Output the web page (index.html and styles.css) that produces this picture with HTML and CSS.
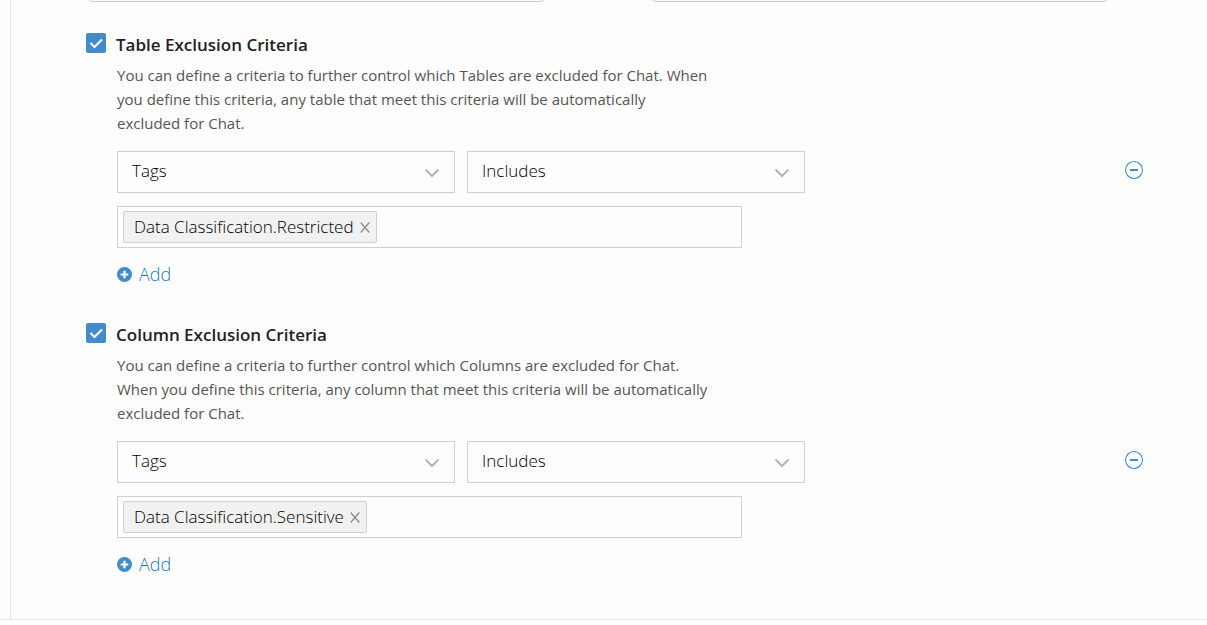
FILE: index.html
```html
<!DOCTYPE html>
<html lang="en">
<head>
  <meta charset="UTF-8">
  <meta name="viewport" content="width=device-width, initial-scale=1">
  <title>Chat Settings</title>
  <link rel="stylesheet" href="styles.css">
</head>
<body>
  <main class="panel">
    <!-- Fields scrolled under the top edge -->
    <div class="field-row">
      <input type="text" class="field" aria-label="Included">
      <input type="text" class="field" aria-label="Excluded">
    </div>

    <!-- Table criteria -->
    <section class="criteria">
      <input type="checkbox" id="tableCriteria" class="check" checked>
      <label for="tableCriteria" class="title">Table Exclusion Criteria</label>
      <div class="content">
        <p class="description">You can define a criteria to further control which Tables are excluded for Chat. When you define this criteria, any table that meet this criteria will be automatically excluded for Chat.</p>
        <div class="rule">
          <div class="rule-fields">
            <select class="select" aria-label="Table attribute">
              <option>Tags</option>
            </select>
            <select class="select" aria-label="Table condition">
              <option>Includes</option>
            </select>
          </div>
          <button type="button" class="remove" aria-label="Remove table rule">
            <svg width="20" height="20" viewBox="0 0 20 20" fill="none" stroke="currentColor">
              <circle cx="10" cy="10" r="8.5" stroke-width="1.1" />
              <path d="M6 10h8" stroke-width="2" />
            </svg>
          </button>
        </div>
        <div class="tag-box">
          <span class="tag">Data Classification.Restricted
            <button type="button" class="tag-close" aria-label="Remove tag">
              <svg width="10" height="12" viewBox="0 0 10 12" fill="none" stroke="currentColor" stroke-width="1.2">
                <path d="M.7 1.5l8.6 10M9.3 1.5l-8.6 10" />
              </svg>
            </button>
          </span>
          <input type="text" class="tag-input" aria-label="Table tags">
        </div>
        <button type="button" class="add">
          <svg width="15" height="15" viewBox="0 0 15 15">
            <circle cx="7.5" cy="7.5" r="7.5" fill="#428bca" />
            <path d="M7.5 3.7v7.6M3.7 7.5h7.6" stroke="#fff" stroke-width="2.2" />
          </svg>
          Add
        </button>
      </div>
    </section>

    <!-- Column criteria -->
    <section class="criteria">
      <input type="checkbox" id="columnCriteria" class="check" checked>
      <label for="columnCriteria" class="title">Column Exclusion Criteria</label>
      <div class="content">
        <p class="description">You can define a criteria to further control which Columns are excluded for Chat. When you define this criteria, any column that meet this criteria will be automatically excluded for Chat.</p>
        <div class="rule">
          <div class="rule-fields">
            <select class="select" aria-label="Column attribute">
              <option>Tags</option>
            </select>
            <select class="select" aria-label="Column condition">
              <option>Includes</option>
            </select>
          </div>
          <button type="button" class="remove" aria-label="Remove column rule">
            <svg width="20" height="20" viewBox="0 0 20 20" fill="none" stroke="currentColor">
              <circle cx="10" cy="10" r="8.5" stroke-width="1.1" />
              <path d="M6 10h8" stroke-width="2" />
            </svg>
          </button>
        </div>
        <div class="tag-box">
          <span class="tag">Data Classification.Sensitive
            <button type="button" class="tag-close" aria-label="Remove tag">
              <svg width="10" height="12" viewBox="0 0 10 12" fill="none" stroke="currentColor" stroke-width="1.2">
                <path d="M.7 1.5l8.6 10M9.3 1.5l-8.6 10" />
              </svg>
            </button>
          </span>
          <input type="text" class="tag-input" aria-label="Column tags">
        </div>
        <button type="button" class="add">
          <svg width="15" height="15" viewBox="0 0 15 15">
            <circle cx="7.5" cy="7.5" r="7.5" fill="#428bca" />
            <path d="M7.5 3.7v7.6M3.7 7.5h7.6" stroke="#fff" stroke-width="2.2" />
          </svg>
          Add
        </button>
      </div>
    </section>
  </main>
</body>
</html>
```

FILE: styles.css
```css
:root {
  --blue: #428bca;
  --link: #1f78b4;
  --line: #e4e4e4;
  --border: #d0d0d0;
  --text: #222;
}

* {
  box-sizing: border-box;
}

body {
  margin: 0;
  background: #fefefe;
  color: var(--text);
  font-family: "Open Sans", sans-serif;
  font-size: 17px;
  border-bottom: 1px solid var(--line);
}

button,
input,
select {
  font: inherit;
  color: inherit;
}

button {
  padding: 0;
  border: none;
  background: none;
  cursor: pointer;
}

svg {
  display: block;
}

.panel {
  margin-left: 10px;
  padding: 0 63px 43px 75px;
  border-left: 1px solid var(--line);
}

.field-row {
  display: grid;
  grid-template-columns: 1fr 1fr;
  align-content: end;
  gap: 104px;
  height: 2px;
  margin: 0 35px 31px 1px;
  overflow: hidden;
}

.field {
  width: 100%;
  height: 42px;
  border: 1px solid #c4c8c8;
  border-radius: 6px;
  background: #fefefe;
}

.criteria {
  display: grid;
  grid-template-columns: 20px 1fr;
  column-gap: 10px;
}

.criteria + .criteria {
  margin-top: 37px;
}

.check {
  appearance: none;
  width: 20px;
  height: 20px;
  margin: 0;
  border-radius: 2px;
  background: #fff;
  border: 1px solid var(--border);
}

.check:checked {
  border: none;
  background: var(--blue) url("data:image/svg+xml,%3Csvg xmlns='http://www.w3.org/2000/svg' width='20' height='20' fill='none' stroke='white' stroke-width='2'%3E%3Cpath d='M4.5 10l4 4 7.5-7.5'/%3E%3C/svg%3E");
}

.title {
  line-height: 24px;
  font-weight: 600;
}

.content {
  grid-column: 2;
  padding-left: 1px;
  font-weight: 300;
  color: #000;
}

.description {
  max-width: 594px;
  margin: 6px 0 16px;
  font-size: 15px;
  font-weight: 400;
  line-height: 24px;
  color: #555;
}

.rule {
  display: flex;
  align-items: center;
  justify-content: space-between;
  margin-bottom: 13px;
}

.rule-fields {
  display: flex;
  flex: 0 1 688px;
  gap: 12px;
}

.select {
  appearance: none;
  flex: 1;
  height: 42px;
  padding: 0 40px 4px 14px;
  border: 1px solid var(--border);
  border-radius: 0;
  background: #fefefe url("data:image/svg+xml,%3Csvg xmlns='http://www.w3.org/2000/svg' width='16' height='12' fill='none' stroke='%23b4b4b4' stroke-width='2'%3E%3Cpath d='M1.5 3.5l6.5 6.5 6.5-6.5'/%3E%3C/svg%3E") no-repeat right 14px center;
}

.remove {
  padding-bottom: 4px;
  color: var(--blue);
}

.tag-box {
  display: flex;
  align-items: center;
  max-width: 625px;
  height: 42px;
  padding: 0 5px;
  border: 1px solid var(--border);
}

.tag {
  display: flex;
  align-items: center;
  gap: 6px;
  height: 32px;
  padding: 0 6px 2px 10px;
  border: 1px solid var(--border);
  border-radius: 2px;
  background: #f1f1f1;
  white-space: nowrap;
}

.tag-close {
  padding-top: 2px;
  color: #888;
}

.tag-input {
  flex: 1;
  min-width: 0;
  border: none;
  outline: none;
  background: none;
}

.add {
  display: flex;
  align-items: center;
  gap: 7px;
  margin-top: 14px;
  font-size: 18px;
  line-height: 24px;
  color: var(--link);
}
```
